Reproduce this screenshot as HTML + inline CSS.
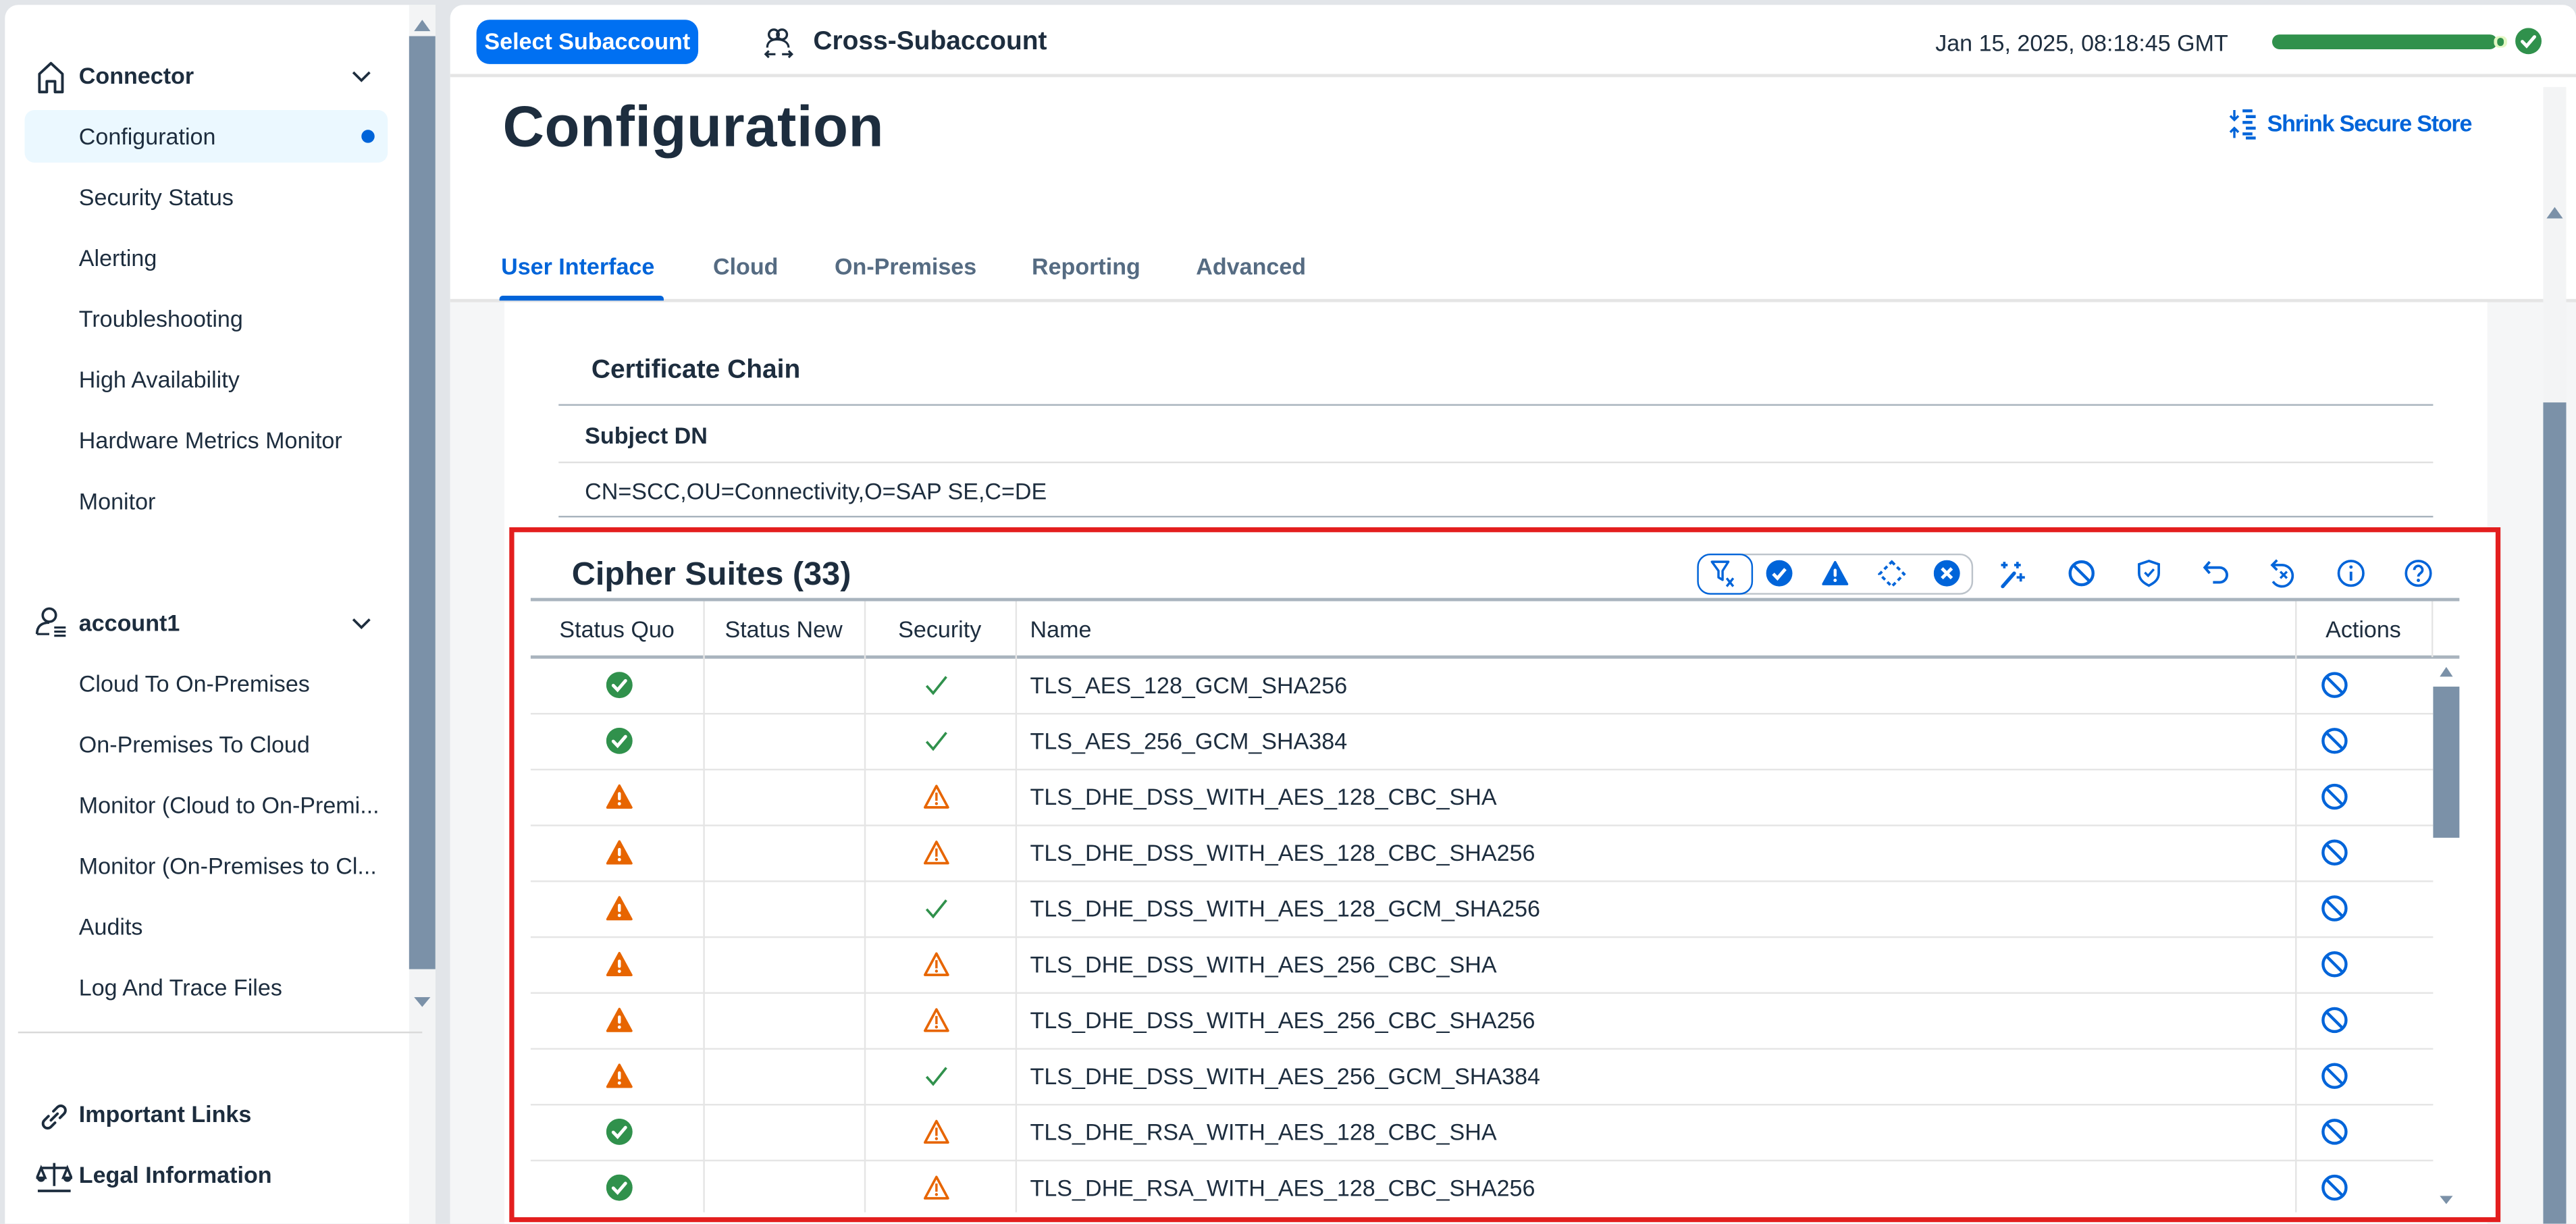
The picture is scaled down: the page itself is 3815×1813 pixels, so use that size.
<!DOCTYPE html>
<html><head><meta charset="utf-8"><style>
html,body{margin:0;padding:0;width:3815px;height:1813px;overflow:hidden;background:#e5e8eb;}
#w{position:absolute;left:0;top:0;width:1568px;height:745px;transform:scale(2.4331);transform-origin:0 0;font-family:"Liberation Sans",sans-serif;color:#1d2d3e;background:#e2e5e9;}
.a{position:absolute;white-space:nowrap;}
.side{position:absolute;left:3px;top:3px;width:262px;height:742px;background:#fff;border-radius:8px 0 0 0;}
.nav{position:absolute;left:48px;font-size:14px;color:#1d2d3e;transform:translateY(-50%);}
.b{font-weight:bold;}
.main{position:absolute;left:274px;top:3px;width:1294px;height:742px;background:#fff;border-radius:8px 8px 0 0;overflow:hidden;}
.row{position:absolute;left:323px;width:1158px;height:34px;border-bottom:1px solid #e5e5e5;}
.cell{position:absolute;top:0;height:34px;line-height:34px;font-size:14px;}
</style></head><body><div id="w">
<svg width="0" height="0" style="position:absolute">
<defs>
<g id="okc"><circle cx="8" cy="8" r="8" fill="#30914c"/><path d="M4.3 8.3l2.6 2.7 4.8-5.6" stroke="#fff" stroke-width="2" fill="none" stroke-linecap="round"/></g>
<g id="wf"><path d="M8 1.2L15.3 14.6H0.7Z" fill="#e76500" stroke="#e76500" stroke-width="1.4" stroke-linejoin="round"/><rect x="7.1" y="5.2" width="1.8" height="5" rx=".9" fill="#fff"/><circle cx="8" cy="12.3" r="1" fill="#fff"/></g>
<g id="wo"><path d="M8 1.5L15 14.5H1Z" fill="none" stroke="#e76500" stroke-width="1.5" stroke-linejoin="round"/><rect x="7.3" y="5.5" width="1.4" height="5" fill="#e76500"/><circle cx="8" cy="12.2" r=".9" fill="#e76500"/></g>
<g id="ck"><path d="M2 8.5l4 4.5 8-10" stroke="#30914c" stroke-width="1.5" fill="none"/></g>
<g id="no"><circle cx="8" cy="8" r="7" fill="none" stroke="#0064d9" stroke-width="1.8"/><path d="M3.3 3.3L12.7 12.7" stroke="#0064d9" stroke-width="1.8"/></g>
</defs></svg>

<div class="side">
 <svg class="a" style="left:19px;top:34px" width="18" height="20" viewBox="0 0 18 20"><path d="M2 19V8L9 1.5 16 8V19H11.5V12.5H6.5V19Z" fill="none" stroke="#1d2d3e" stroke-width="1.6" stroke-linejoin="round"/></svg>
 <div class="nav b" style="top:43px;left:45px">Connector</div>
 <svg class="a" style="left:211px;top:40px" width="12" height="8"><path d="M1 1l5 5 5-5" stroke="#1d2d3e" stroke-width="1.5" fill="none"/></svg>
 <div class="a" style="left:12px;top:64px;width:221px;height:32px;background:#ebf8ff;border-radius:6px"></div>
 <div class="a" style="left:217px;top:76px;width:8px;height:8px;border-radius:50%;background:#0064d9"></div>
 <div class="nav" style="left:45px;top:80px">Configuration</div>
 <div class="nav" style="left:45px;top:117px">Security Status</div>
 <div class="nav" style="left:45px;top:154px">Alerting</div>
 <div class="nav" style="left:45px;top:191px">Troubleshooting</div>
 <div class="nav" style="left:45px;top:228px">High Availability</div>
 <div class="nav" style="left:45px;top:265px">Hardware Metrics Monitor</div>
 <div class="nav" style="left:45px;top:302px">Monitor</div>
 <svg class="a" style="left:18px;top:366px" width="24" height="20"><circle cx="9" cy="5.5" r="4" fill="none" stroke="#1d2d3e" stroke-width="1.5"/><path d="M1.5 17c0-5 3-7 7.5-7" fill="none" stroke="#1d2d3e" stroke-width="1.5"/><path d="M1.5 17H9M12 13h7M12 15.5h7M12 18h7" stroke="#1d2d3e" stroke-width="1.3"/></svg>
 <div class="nav b" style="left:45px;top:376px">account1</div>
 <svg class="a" style="left:211px;top:373px" width="12" height="8"><path d="M1 1l5 5 5-5" stroke="#1d2d3e" stroke-width="1.5" fill="none"/></svg>
 <div class="nav" style="left:45px;top:413px">Cloud To On-Premises</div>
 <div class="nav" style="left:45px;top:450px">On-Premises To Cloud</div>
 <div class="nav" style="left:45px;top:487px">Monitor (Cloud to On-Premi...</div>
 <div class="nav" style="left:45px;top:524px">Monitor (On-Premises to Cl...</div>
 <div class="nav" style="left:45px;top:561px">Audits</div>
 <div class="nav" style="left:45px;top:598px">Log And Trace Files</div>
 <div class="a" style="left:246px;top:0;width:16px;height:742px;background:#f3f4f5"></div>
 <div class="a" style="left:246px;top:19px;width:16px;height:568px;background:#7b91a8"></div>
 <svg class="a" style="left:249px;top:9px" width="10" height="7"><path d="M5 0L10 7H0Z" fill="#7b91a8"/></svg>
 <svg class="a" style="left:249px;top:604px" width="10" height="6"><path d="M0 0H10L5 6Z" fill="#7b91a8"/></svg>
 <div class="a" style="left:8px;top:625px;width:246px;height:1px;background:#d9d9d9"></div>
 <svg class="a" style="left:20px;top:667px" width="20" height="20"><path d="M8 12l4-4M6.5 9.5L4 12a2.8 2.8 0 004 4l2.5-2.5M13.5 10.5L16 8a2.8 2.8 0 00-4-4L9.5 6.5" stroke="#1d2d3e" stroke-width="1.6" fill="none" stroke-linecap="round"/></svg>
 <div class="nav b" style="left:45px;top:675px">Important Links</div>
 <svg class="a" style="left:19px;top:703px" width="22" height="20"><path d="M11 2v14M3 5h16M1 19h20M3 5l-2.5 6h5zM19 5l-2.5 6h5z" stroke="#1d2d3e" stroke-width="1.5" fill="none"/><path d="M0.5 11a2.5 2.5 0 005 0zM16.5 11a2.5 2.5 0 005 0z" fill="#1d2d3e"/></svg>
 <div class="nav b" style="left:45px;top:712px">Legal Information</div>
</div>

<div class="main">
 <div class="a" style="left:16px;top:9px;width:135px;height:27px;background:#0070f2;border-radius:8px;color:#fff;font-size:14px;font-weight:bold;line-height:27px;text-align:center">Select Subaccount</div>
 <svg class="a" style="left:191px;top:13px" width="18" height="20"><circle cx="6" cy="5" r="3" fill="none" stroke="#1d2d3e" stroke-width="1.4"/><circle cx="11" cy="5" r="3" fill="none" stroke="#1d2d3e" stroke-width="1.4"/><path d="M2 13c0-3 2-5 6-5s7 2 7 5M1 17h6M11 17h6M3 15l-2 2 2 2M15 15l2 2-2 2" stroke="#1d2d3e" stroke-width="1.3" fill="none"/></svg>
 <div class="a b" style="left:221px;top:13px;font-size:16px;line-height:20px">Cross-Subaccount</div>
 <div class="a" style="left:904px;top:14px;font-size:14px;line-height:18px">Jan 15, 2025, 08:18:45 GMT</div>
 <div class="a" style="left:1109px;top:18px;width:137px;height:9px;border-radius:5px;background:#30914c"></div>
 <div class="a" style="left:1244px;top:19px;width:8px;height:7px;border-radius:3px;background:#e3f7c4"></div>
 <div class="a" style="left:1246px;top:20px;width:4px;height:5px;border-radius:2px;background:#30914c"></div>
 <svg class="a" style="left:1257px;top:14px" width="17" height="17"><use href="#okc"/></svg>
 <div class="a" style="left:0;top:42px;width:1294px;height:2px;background:#e5e5e5"></div>
 <div class="a b" style="left:32px;top:52px;font-size:35px;line-height:46px;letter-spacing:0.2px">Configuration</div>
 <svg class="a" style="left:1083px;top:63px" width="18" height="19"><path d="M3 1v6M0.5 4.5L3 7l2.5-2.5M3 18v-6M0.5 14.5L3 12l2.5 2.5" stroke="#0064d9" stroke-width="1.4" fill="none"/><path d="M8 1.5h6M10 5h6M8 8.5h6M10 12h6M8 15.5h6M10 18h6" stroke="#0064d9" stroke-width="1.8"/></svg>
 <div class="a b" style="left:1106px;top:63px;font-size:14px;line-height:18px;color:#0064d9;letter-spacing:-0.5px">Shrink Secure Store</div>
 <div class="a b" style="left:31px;top:150px;font-size:14px;line-height:18px;color:#0064d9">User Interface</div>
 <div class="a b" style="left:160px;top:150px;font-size:14px;line-height:18px;color:#556b82">Cloud</div>
 <div class="a b" style="left:234px;top:150px;font-size:14px;line-height:18px;color:#556b82">On-Premises</div>
 <div class="a b" style="left:354px;top:150px;font-size:14px;line-height:18px;color:#556b82">Reporting</div>
 <div class="a b" style="left:454px;top:150px;font-size:14px;line-height:18px;color:#556b82">Advanced</div>
 <div class="a" style="left:0;top:181px;width:1294px;height:561px;background:#f5f6f7"></div>
 <div class="a" style="left:0;top:179px;width:1294px;height:2px;background:#e5e5e5"></div>
 <div class="a" style="left:30px;top:177px;width:100px;height:3px;background:#0064d9;border-radius:2px 2px 0 0"></div>
 <div class="a" style="left:33px;top:181px;width:1207px;height:561px;background:#fff"></div>
 <div class="a" style="left:1274px;top:50px;width:14px;height:692px;background:#f3f4f5"></div>
 <div class="a" style="left:1274px;top:242px;width:14px;height:500px;background:#7b91a8"></div>
 <svg class="a" style="left:1276px;top:123px" width="10" height="7"><path d="M5 0L10 7H0Z" fill="#7b91a8"/></svg>
</div>

<div class="a b" style="left:360px;top:216px;font-size:16px;line-height:20px">Certificate Chain</div>
<div class="a" style="left:340px;top:246px;width:1141px;height:1px;background:#a9b4be"></div>
<div class="a b" style="left:356px;top:256px;font-size:14px;line-height:18px">Subject DN</div>
<div class="a" style="left:340px;top:281px;width:1141px;height:1px;background:#e0e0e0"></div>
<div class="a" style="left:356px;top:290px;font-size:14px;line-height:18px">CN=SCC,OU=Connectivity,O=SAP SE,C=DE</div>
<div class="a" style="left:340px;top:314px;width:1141px;height:1px;background:#a9b4be"></div>

<div class="a" style="left:310px;top:321px;width:1206px;height:417px;border:3px solid #e31e1e;background:#fff"></div>
<div class="a b" style="left:348px;top:338px;font-size:20px;line-height:24px">Cipher Suites (33)</div>

<div class="a" style="left:1033px;top:337px;width:166px;height:23px;border:1px solid #bcc3ca;border-radius:8px"></div>
<div class="a" style="left:1033px;top:337px;width:32px;height:23px;border:1px solid #0064d9;border-radius:8px;background:#fff"></div>
<svg class="a" style="left:1040px;top:340px" width="20" height="20"><path d="M2 2h10L8.5 7.5V13L6 11.5V7.5Z" fill="none" stroke="#0064d9" stroke-width="1.4" stroke-linejoin="round"/><path d="M11 12l4 5M15 12l-4 5" stroke="#0064d9" stroke-width="1.4"/></svg>
<svg class="a" style="left:1075px;top:341px" width="17" height="17"><circle cx="8" cy="8" r="8" fill="#0064d9"/><path d="M4.3 8.3l2.6 2.7 4.8-5.6" stroke="#fff" stroke-width="2" fill="none"/></svg>
<svg class="a" style="left:1109px;top:341px" width="17" height="17"><path d="M8 1.2L15.3 14.6H0.7Z" fill="#0064d9" stroke="#0064d9" stroke-width="1.4" stroke-linejoin="round"/><rect x="7.1" y="5.2" width="1.8" height="5" rx=".9" fill="#fff"/><circle cx="8" cy="12.3" r="1" fill="#fff"/></svg>
<svg class="a" style="left:1143px;top:341px" width="17" height="17"><path d="M8.5 1L16 8.5 8.5 16 1 8.5Z" fill="none" stroke="#0064d9" stroke-width="1.6" stroke-dasharray="2.5 2"/></svg>
<svg class="a" style="left:1177px;top:341px" width="17" height="17"><circle cx="8" cy="8" r="8" fill="#0064d9"/><path d="M5 5l6 6M11 5l-6 6" stroke="#fff" stroke-width="2"/></svg>
<svg class="a" style="left:1216px;top:340px" width="18" height="19"><path d="M3 17l7-8" stroke="#0064d9" stroke-width="2.2" stroke-linecap="round"/><path d="M4 2v4M2 4h4M12 2v4M10 4h4M14 9v5M11.5 11.5h5" stroke="#0064d9" stroke-width="1.5"/></svg>
<svg class="a" style="left:1259px;top:341px" width="17" height="17"><use href="#no"/></svg>
<svg class="a" style="left:1300px;top:340px" width="17" height="18"><path d="M8 1.5L14 3.5V9c0 4-3 6-6 7.5C5 15 2 13 2 9V3.5Z" fill="none" stroke="#0064d9" stroke-width="1.5"/><path d="M5.5 8.5l2 2 3.5-4" stroke="#0064d9" stroke-width="1.4" fill="none"/></svg>
<svg class="a" style="left:1340px;top:340px" width="18" height="18"><path d="M5 2L2 5.5 5 9M2 5.5h9a4.5 4.5 0 010 9H7" stroke="#0064d9" stroke-width="1.6" fill="none"/></svg>
<svg class="a" style="left:1381px;top:340px" width="18" height="18"><path d="M5 1L2 4l3 3M2 4h6a6.5 6.5 0 11-5.5 10" stroke="#0064d9" stroke-width="1.5" fill="none"/><path d="M7 8l4 4M11 8l-4 4" stroke="#0064d9" stroke-width="1.4"/></svg>
<svg class="a" style="left:1422px;top:340px" width="18" height="18"><circle cx="9" cy="9" r="7.5" fill="none" stroke="#0064d9" stroke-width="1.5"/><path d="M9 8v5.5" stroke="#0064d9" stroke-width="1.6"/><circle cx="9" cy="5.2" r="1" fill="#0064d9"/></svg>
<svg class="a" style="left:1463px;top:340px" width="18" height="18"><circle cx="9" cy="9" r="7.5" fill="none" stroke="#0064d9" stroke-width="1.5"/><path d="M6.5 7a2.5 2.5 0 115 0c0 2-2.5 2-2.5 4" stroke="#0064d9" stroke-width="1.5" fill="none"/><circle cx="9" cy="13.3" r="1" fill="#0064d9"/></svg>

<div class="a" style="left:323px;top:364px;width:1174px;height:2px;background:#a9b4be"></div>
<div class="a" style="left:323px;top:366px;width:1158px;height:33px;font-size:14px;line-height:34px">
 <div class="a" style="left:0;width:105px;text-align:center">Status Quo</div>
 <div class="a" style="left:105px;width:98px;text-align:center">Status New</div>
 <div class="a" style="left:203px;width:92px;text-align:center">Security</div>
 <div class="a" style="left:304px">Name</div>
 <div class="a" style="left:1074px;width:83px;text-align:center">Actions</div>
</div>
<div class="a" style="left:323px;top:399px;width:1174px;height:2px;background:#a9b4be"></div>
<div class="a" style="left:428px;top:366px;width:1px;height:372px;background:#e5e5e5"></div>
<div class="a" style="left:526px;top:366px;width:1px;height:372px;background:#e5e5e5"></div>
<div class="a" style="left:618px;top:366px;width:1px;height:372px;background:#e5e5e5"></div>
<div class="a" style="left:1397px;top:366px;width:1px;height:372px;background:#e5e5e5"></div>
<div class="a" style="left:1480px;top:366px;width:1px;height:34px;background:#e5e5e5"></div>
<div class="a" style="left:1481px;top:418px;width:16px;height:92px;background:#7b91a8"></div>
<svg class="a" style="left:1485px;top:406px" width="8" height="6"><path d="M4 0L8 6H0Z" fill="#7b91a8"/></svg>
<svg class="a" style="left:1485px;top:728px" width="8" height="5"><path d="M0 0H8L4 5Z" fill="#7b91a8"/></svg>

<div id="rows"></div>
<script>
var d=[["okc","ck","TLS_AES_128_GCM_SHA256"],["okc","ck","TLS_AES_256_GCM_SHA384"],["wf","wo","TLS_DHE_DSS_WITH_AES_128_CBC_SHA"],["wf","wo","TLS_DHE_DSS_WITH_AES_128_CBC_SHA256"],["wf","ck","TLS_DHE_DSS_WITH_AES_128_GCM_SHA256"],["wf","wo","TLS_DHE_DSS_WITH_AES_256_CBC_SHA"],["wf","wo","TLS_DHE_DSS_WITH_AES_256_CBC_SHA256"],["wf","ck","TLS_DHE_DSS_WITH_AES_256_GCM_SHA384"],["okc","wo","TLS_DHE_RSA_WITH_AES_128_CBC_SHA"],["okc","wo","TLS_DHE_RSA_WITH_AES_128_CBC_SHA256"]];
var h="";
d.forEach(function(r,i){var y=400+i*34;
h+='<div class="row" style="top:'+y+'px;'+(i==9?'border-bottom:none':'')+'"><svg class="a" style="left:46px;top:9px" width="17" height="17"><use href="#'+r[0]+'"/></svg><svg class="a" style="left:239px;top:9px" width="17" height="17"><use href="#'+r[1]+'"/></svg><div class="cell" style="left:304px">'+r[2]+'</div><svg class="a" style="left:1090px;top:9px" width="17" height="17"><use href="#no"/></svg></div>';});
document.getElementById("rows").innerHTML=h;
</script>
</div></body></html>
